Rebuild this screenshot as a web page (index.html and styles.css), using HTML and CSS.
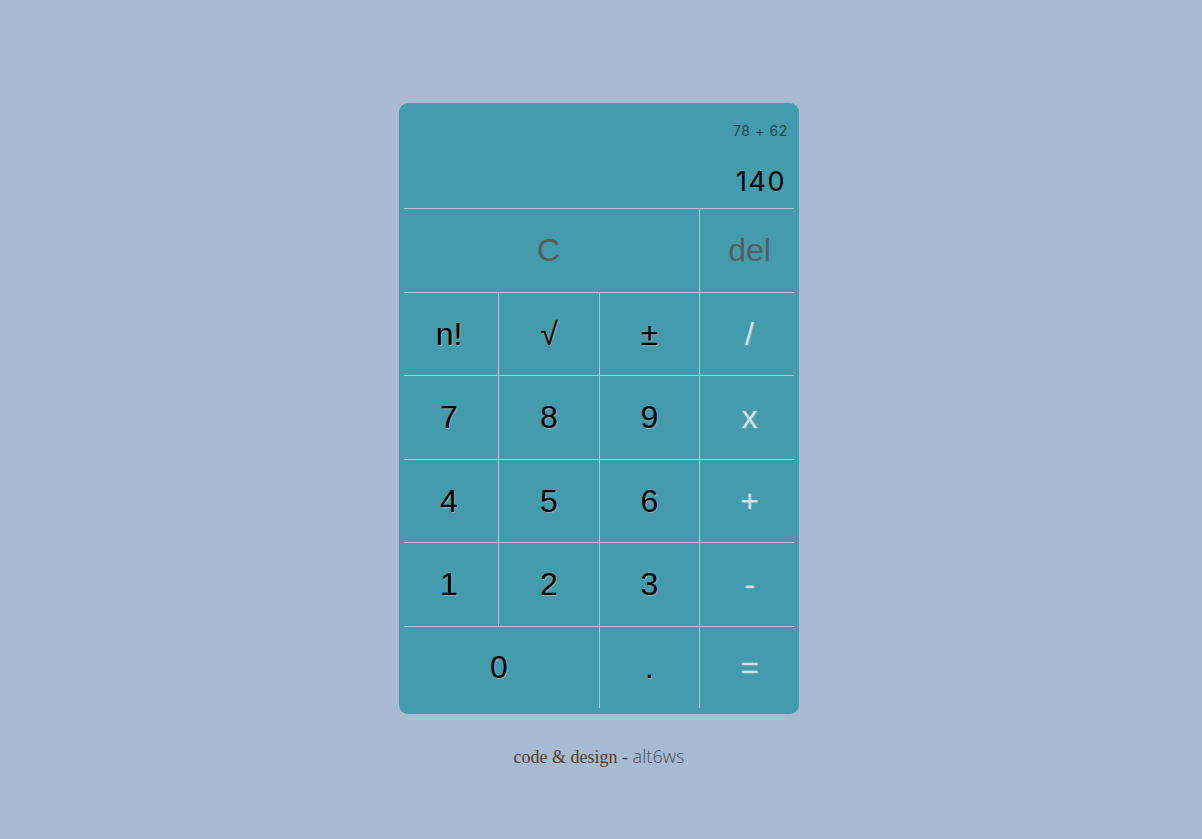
FILE: index.html
```html
<!DOCTYPE html>
<html lang="en">
<head>
<meta charset="utf-8">
<title>Calculator</title>
<link rel="stylesheet" href="styles.css">
</head>
<body>
<main class="page">
  <div class="calc">
    <div class="display">
      <div class="prev">78 + 62</div>
      <div class="curr">140</div>
    </div>
    <div class="keys">
      <button class="key fn span3 first clear">C</button>
      <button class="key fn last">del</button>
      <button class="key num first">n!</button>
      <button class="key num">√</button>
      <button class="key num">±</button>
      <button class="key op last">/</button>
      <button class="key num first">7</button>
      <button class="key num">8</button>
      <button class="key num">9</button>
      <button class="key op last">x</button>
      <button class="key num first">4</button>
      <button class="key num">5</button>
      <button class="key num">6</button>
      <button class="key op last">+</button>
      <button class="key num first">1</button>
      <button class="key num">2</button>
      <button class="key num">3</button>
      <button class="key op last">-</button>
      <button class="key num span2 first zero">0</button>
      <button class="key num">.</button>
      <button class="key op last">=</button>
    </div>
  </div>
  <footer class="credit">code &amp; design - <span class="author">alt6ws</span></footer>
</main>
</body>
</html>
```
FILE: styles.css
```css
html, body {
  margin: 0;
  padding: 0;
}
body {
  background: #a8bbd3;
  min-height: 839px;
}
.page {
  display: flex;
  flex-direction: column;
  align-items: center;
  padding-top: 103px;
  padding-right: 4px;
}
.calc {
  width: 400px;
  height: 611px;
  box-sizing: border-box;
  background: #439bab;
  border-radius: 9px;
  padding: 0 5px 6px;
  display: flex;
  flex-direction: column;
}
.display {
  height: 105px;
  box-sizing: border-box;
  display: flex;
  flex-direction: column;
  align-items: flex-end;
  padding: 19px 6px 0 0;
  font-family: Inter, "Open Sans", sans-serif;
}
.prev {
  font-size: 14px;
  color: #27464f;
  letter-spacing: 0.6px;
}
.curr {
  margin-top: 26px;
  font-size: 27px;
  color: #000;
  letter-spacing: 1.5px;
  padding-right: 2px;
}
.keys {
  height: 500px;
  display: grid;
  grid-template-columns: 94px 101px 100px 95px;
  grid-template-rows: 84px 83px 84px 83px 84px 82px;
}
.key {
  margin: 0;
  background: transparent;
  border: none;
  border-top: 1px solid #b3c5da;
  border-left: 1px solid #b3c5da;
  font-family: "Liberation Sans", Arial, sans-serif;
  font-size: 32px;
  padding: 0;
  cursor: pointer;
}
.key.first {
  border-left: none;
  padding-right: 4px;
}
.key.last {
  padding-left: 5px;
}
.key.clear {
  padding-right: 6px;
}
.key.zero {
  padding-right: 5px;
}
.span3 {
  grid-column: span 3;
}
.span2 {
  grid-column: span 2;
}
.num {
  color: #000;
  text-shadow: 1px 1px 1px #9aa7b2;
}
.op {
  color: #cfe1f1;
  text-shadow: 1px 1px 1px #7fa3b8;
}
.fn {
  color: #555b5e;
}
.credit {
  margin-top: 30px;
  font-family: "Liberation Serif", serif;
  font-size: 18px;
  color: #5a3a22;
}
.author {
  font-family: "Noto Sans", sans-serif;
  font-weight: 300;
  color: #555866;
}
```
